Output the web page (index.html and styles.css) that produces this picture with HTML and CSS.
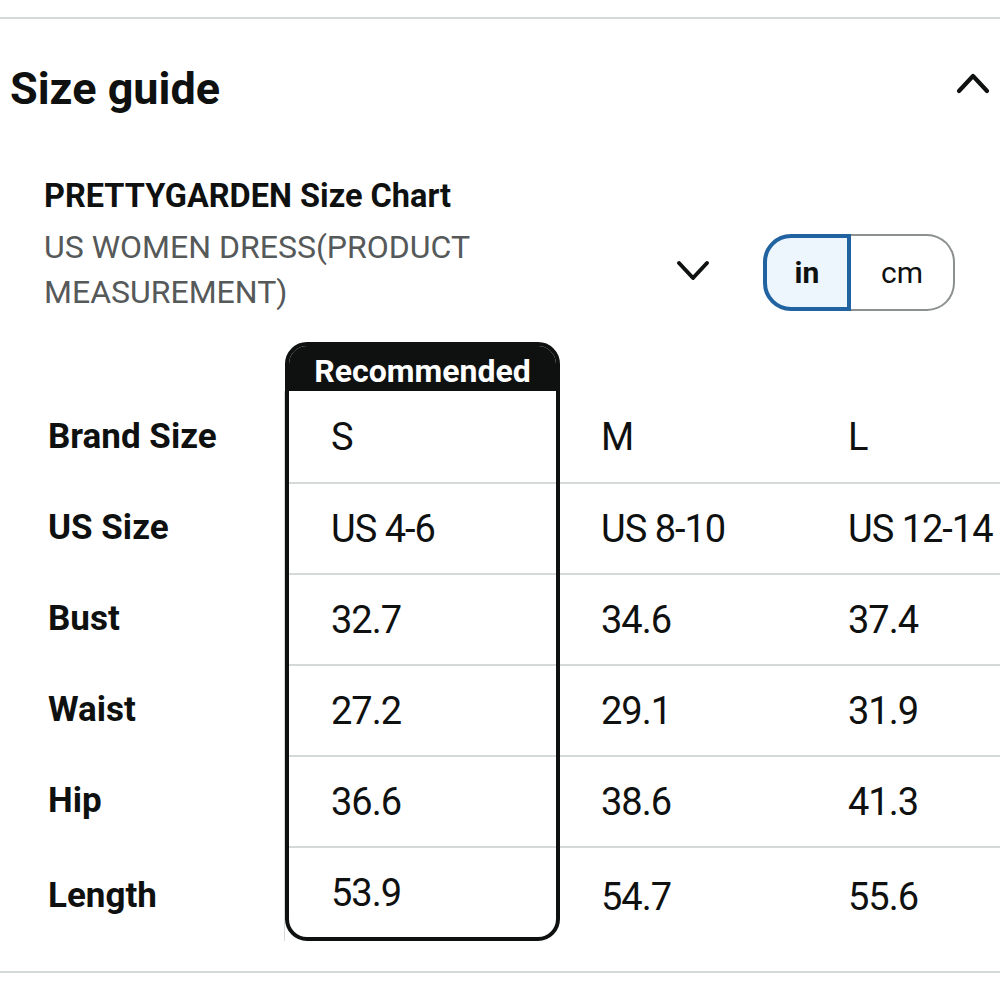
FILE: index.html
```html
<!DOCTYPE html>
<html lang="en">
<head>
<meta charset="utf-8">
<title>Size guide</title>
<link rel="stylesheet" href="styles.css">
</head>
<body>
<div class="page">
  <div class="rule rule-top"></div>
  <div class="guide-head">
    <h2 class="guide-title">Size guide</h2>
    <svg class="chev-up" width="34" height="22" viewBox="0 0 34 22"><polyline points="3,19 17,4 31,19" fill="none" stroke="#0f1111" stroke-width="4.2" stroke-linecap="round" stroke-linejoin="round"/></svg>
  </div>
  <div class="chart-intro">
    <div class="chart-name">PRETTYGARDEN Size Chart</div>
    <div class="chart-controls">
      <div class="chart-sub">US WOMEN DRESS(PRODUCT<br>MEASUREMENT)</div>
      <svg class="chev-down" width="34" height="22" viewBox="0 0 34 22"><polyline points="3,3 17,18 31,3" fill="none" stroke="#0f1111" stroke-width="4" stroke-linecap="round" stroke-linejoin="round"/></svg>
      <div class="unit-toggle">
        <div class="unit unit-on">in</div>
        <div class="unit unit-off">cm</div>
      </div>
    </div>
  </div>
  <div class="chart">
    <div class="col col-label">
      <div class="spacer"></div>
      <div class="cell">Brand Size</div>
      <div class="cell">US Size</div>
      <div class="cell">Bust</div>
      <div class="cell">Waist</div>
      <div class="cell">Hip</div>
      <div class="cell cell-last">Length</div>
    </div>
    <div class="col col-rec">
      <div class="rec-head">Recommended</div>
      <div class="cell">S</div>
      <div class="cell">US 4-6</div>
      <div class="cell">32.7</div>
      <div class="cell">27.2</div>
      <div class="cell">36.6</div>
      <div class="cell">53.9</div>
    </div>
    <div class="col col-m">
      <div class="spacer"></div>
      <div class="cell">M</div>
      <div class="cell">US 8-10</div>
      <div class="cell">34.6</div>
      <div class="cell">29.1</div>
      <div class="cell">38.6</div>
      <div class="cell cell-last">54.7</div>
    </div>
    <div class="col col-l">
      <div class="spacer"></div>
      <div class="cell">L</div>
      <div class="cell">US 12-14</div>
      <div class="cell">37.4</div>
      <div class="cell">31.9</div>
      <div class="cell">41.3</div>
      <div class="cell cell-last">55.6</div>
    </div>
  </div>
  <div class="rule rule-bottom"></div>
</div>
</body>
</html>
```

FILE: styles.css
```css
* { box-sizing: border-box; }
html, body { margin: 0; padding: 0; background: #ffffff; }
body {
  font-family: Roboto, "Liberation Sans", Arial, sans-serif;
  color: #0f1111;
  width: 1000px;
  height: 1000px;
  overflow: hidden;
}
.page { padding-top: 17px; }
.rule { height: 2px; background: #d5d9d9; }

.guide-head {
  display: flex;
  align-items: center;
  justify-content: space-between;
  height: 138px;
  padding: 0 10px 0 10px;
}
.guide-title {
  margin: 0;
  font-size: 45px;
  font-weight: 700;
  letter-spacing: 0;
  line-height: 1;
}
.chev-up { margin-bottom: 10px; }

.chart-intro { padding: 19px 44px 0 44px; }
.chart-name {
  font-size: 32.5px;
  font-weight: 700;
  line-height: 40px;
}
.chart-controls {
  display: flex;
  align-items: center;
  margin-top: 9px;
}
.chart-sub {
  flex: 1;
  font-size: 32px;
  line-height: 45px;
  color: #565959;
}
.chev-down { margin-right: 53px; margin-top: 2px; }
.unit-toggle {
  display: flex;
  height: 77px;
  margin-right: 1px;
  margin-top: 5px;
}
.unit {
  display: flex;
  align-items: center;
  justify-content: center;
  font-size: 30px;
}
.unit-on {
  width: 88px;
  border: 4px solid #2162a1;
  background: #edf6fc;
  border-radius: 28px 0 0 28px;
  font-weight: 700;
}
.unit-off {
  width: 104px;
  border: 2px solid #8d9090;
  border-left: none;
  border-radius: 0 28px 28px 0;
}

.chart {
  display: flex;
  margin-top: 27px;
}
.col { display: flex; flex-direction: column; }
.spacer { height: 49px; }
.cell {
  height: 91px;
  display: flex;
  align-items: center;
  font-size: 38px;
  letter-spacing: -1px;
  white-space: nowrap;
  border-top: 2px solid #d5d9d9;
}
.cell-last { height: 95px; padding-top: 4px; }
.col-label { width: 285px; }
.col-label .cell {
  padding-left: 48px;
  font-size: 35px;
  font-weight: 700;
  letter-spacing: 0;
  border-top: none;
  border-right: 1px solid #d5d9d9;
}
.col-rec {
  width: 275px;
  border: 4px solid #0f1111;
  border-radius: 22px;
  overflow: hidden;
}
.rec-head {
  height: 45px;
  background: #0f1111;
  color: #ffffff;
  font-size: 32px;
  font-weight: 700;
  display: flex;
  align-items: center;
  justify-content: center;
  padding-top: 4px;
}
.col-rec .cell { padding-left: 42px; }
.col-m { width: 247px; }
.col-l { flex: 1; }
.col-m .cell, .col-l .cell { padding-left: 41px; }
.col-rec .rec-head + .cell,
.col-m .spacer + .cell,
.col-l .spacer + .cell { border-top: none; }

.rule-bottom { margin-top: 30px; }
```
